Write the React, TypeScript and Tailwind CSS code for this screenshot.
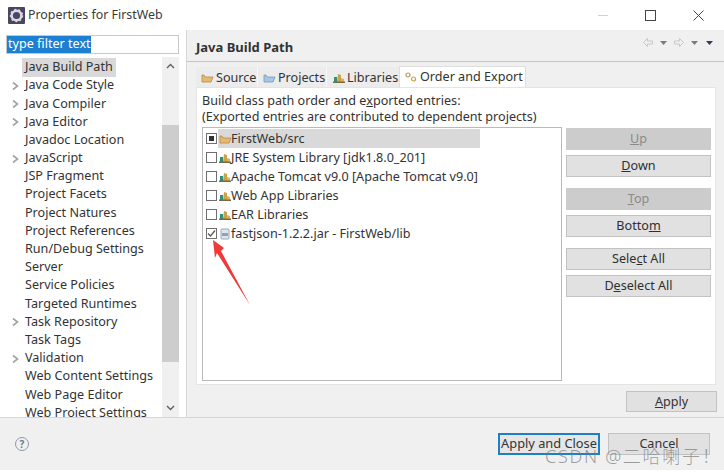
import React from "react";

const font = { fontFamily: '"Noto Sans", "Noto Sans CJK SC", sans-serif' };

const Chevron = () => (
  <svg width="7" height="10" viewBox="0 0 7 10" className="shrink-0">
    <path d="M1 1.5 L5.5 5 L1 8.5" fill="none" stroke="#a3a3a3" strokeWidth="1.6" />
  </svg>
);

const tree: [string, boolean][] = [
  ["Java Build Path", false],
  ["Java Code Style", true],
  ["Java Compiler", true],
  ["Java Editor", true],
  ["Javadoc Location", false],
  ["JavaScript", true],
  ["JSP Fragment", false],
  ["Project Facets", false],
  ["Project Natures", false],
  ["Project References", false],
  ["Run/Debug Settings", false],
  ["Server", false],
  ["Service Policies", false],
  ["Targeted Runtimes", false],
  ["Task Repository", true],
  ["Task Tags", false],
  ["Validation", true],
  ["Web Content Settings", false],
  ["Web Page Editor", false],
  ["Web Project Settings", false],
];

const Btn = ({ label, u, off, mt }: { label: string; u: number; off?: boolean; mt: string }) => (
  <div
    className={`h-[22px] w-[145px] border flex items-center justify-center text-[12.6px] ${mt} ${
      off ? "bg-[#cccccc] border-[#cccccc] text-[#8a8a8a]" : "bg-[#e1e1e1] border-[#c2c2c2] text-[#2f2f2f]"
    }`}
  >
    <span>
      {label.slice(0, u)}
      <span className="underline">{label[u]}</span>
      {label.slice(u + 1)}
    </span>
  </div>
);

const Lib = () => (
  <svg width="12" height="11" viewBox="0 0 12 11" className="shrink-0">
    <path d="M1 10 L1 5 L4 5 L4 10Z" fill="#2f8f7f" />
    <path d="M4 10 L5 2 L8 3 L8 10Z" fill="#c9a24a" />
    <path d="M8 10 L8 6 L11 7 L11 10Z" fill="#d9b45a" />
    <path d="M0 9.5 H12 V11 H0Z" fill="#7a6a42" />
  </svg>
);

const Folder = () => (
  <svg width="13" height="11" viewBox="0 0 13 11" className="shrink-0">
    <path d="M1 3 L1 10 L10 10 L12 5 L4 5 L3 3Z" fill="#e6b973" stroke="#b78a45" strokeWidth="0.8" />
  </svg>
);

const Box = ({ checked, filled }: { checked?: boolean; filled?: boolean }) => (
  <div className="w-[11px] h-[11px] border border-[#6f6f6f] bg-white shrink-0 flex items-center justify-center">
    {filled && <div className="w-[5px] h-[5px] bg-[#333]" />}
    {checked && (
      <svg width="9" height="9" viewBox="0 0 9 9">
        <path d="M1 4.5 L3.5 7 L8 1.5" fill="none" stroke="#555" strokeWidth="1.2" />
      </svg>
    )}
  </div>
);

const Row = ({ icon, text, box, sel }: { icon: React.ReactNode; text: string; box: React.ReactNode; sel?: boolean }) => (
  <div className="h-[19px] flex items-center pl-[3px] text-[12.6px] text-[#333] whitespace-nowrap">
    {box}
    <div className={`ml-px h-[19px] flex items-center w-[262px] ${sel ? "bg-[#d9d9d9]" : ""}`}>
      <div className="w-px" />
      <div className="w-[12px] shrink-0 flex items-center">{icon}</div>
      <span className="pt-[2px]">{text}</span>
    </div>
  </div>
);

export default function App() {
  return (
    <div className="relative w-[724px] h-[474px] bg-white overflow-hidden flex flex-col text-[#333]" style={font}>
      <div className="h-[30px] shrink-0 flex items-center pl-[8px] bg-white">
        <svg width="17" height="17" viewBox="0 0 17 17" className="shrink-0">
          <rect x="0" y="0" width="17" height="17" rx="1" fill="#4b4563" />
          <circle cx="8.5" cy="8.5" r="4.8" fill="none" stroke="#d8d8de" strokeWidth="2.4" />
          <circle cx="8.5" cy="8.5" r="6" fill="none" stroke="#d8d8de" strokeWidth="1.4" strokeDasharray="2 2.2" />
        </svg>
        <span className="ml-[3px] text-[12.4px] text-[#3a3a3a]">Properties for FirstWeb</span>
        <div className="ml-auto flex items-center">
          <div className="w-[10px] h-px bg-[#d0d0d0] mr-[37px]" />
          <div className="w-[11px] h-[11px] border border-[#444] mr-[37px]" />
          <svg width="11" height="11" viewBox="0 0 11 11" className="mr-[20px]">
            <path d="M0.5 0.5 L10.5 10.5 M10.5 0.5 L0.5 10.5" stroke="#444" strokeWidth="1" />
          </svg>
        </div>
      </div>

      <div className="flex h-[387px] shrink-0">
        <div className="w-[187px] shrink-0 border-r border-[#d6d6d6] pl-[6px] pt-[5px] flex flex-col overflow-hidden">
          <div className="w-[173px] h-[19px] shrink-0 border border-[#c8c8c8] flex items-center text-[12.6px] leading-none">
            <span className="bg-[#1d7fd0] text-white h-[17px] pl-[1px] flex items-center">type filter text</span>
          </div>
          <div className="flex mt-[3px] h-[360px] w-[173px]">
            <div className="w-[156px] pt-[1.5px] overflow-hidden">
              {tree.map(([t, c], i) => (
                <div key={t} className="h-[18.2px] flex items-center text-[12.6px] text-[#333] whitespace-nowrap">
                  <div className="w-[16px] flex justify-start pl-[6px] shrink-0">{c && <Chevron />}</div>
                  <span className={`px-[3px] ${i === 0 ? "bg-[#d9d9d9]" : ""}`}>{t}</span>
                </div>
              ))}
            </div>
            <div className="w-[17px] bg-[#f0f0f0] flex flex-col items-center">
              <div className="h-[18px] flex items-center">
                <svg width="9" height="6" viewBox="0 0 9 6"><path d="M1 5 L4.5 1.5 L8 5" fill="none" stroke="#606060" strokeWidth="1.4" /></svg>
              </div>
              <div className="w-[17px] h-[237px] mt-[50px] bg-[#cdcdcd]" />
              <div className="h-[18px] mt-[37px] flex items-center">
                <svg width="9" height="6" viewBox="0 0 9 6"><path d="M1 1 L4.5 4.5 L8 1" fill="none" stroke="#606060" strokeWidth="1.4" /></svg>
              </div>
            </div>
          </div>
        </div>

        <div className="flex-1 bg-[#f0f0f0] flex flex-col">
          <div className="h-[32px] shrink-0 border-b border-[#c4c4c4] flex items-center pl-[9px] pr-[11px]">
            <span className="font-bold text-[13px] text-[#333] pt-[5px]">Java Build Path</span>
            <div className="ml-auto flex items-center gap-[7px] self-start mt-[8px]">
              <svg width="10" height="9" viewBox="0 0 10 9"><path d="M0.5 4.5 L4.5 0.5 V3 H9.5 V6 H4.5 V8.5Z" fill="none" stroke="#c8c8c8" /></svg>
              <svg width="7" height="4" viewBox="0 0 7 4"><path d="M0 0 H7 L3.5 4Z" fill="#7a7a7a" /></svg>
              <svg width="10" height="9" viewBox="0 0 10 9"><path d="M9.5 4.5 L5.5 0.5 V3 H0.5 V6 H5.5 V8.5Z" fill="none" stroke="#c8c8c8" /></svg>
              <svg width="7" height="4" viewBox="0 0 7 4"><path d="M0 0 H7 L3.5 4Z" fill="#7a7a7a" /></svg>
              <svg width="7" height="4" viewBox="0 0 7 4" className="ml-px"><path d="M0 0 H7 L3.5 4Z" fill="#3d3560" /></svg>
            </div>
          </div>

          <div className="flex items-end pl-[9px] h-[25px] shrink-0 text-[12.6px] text-[#333] whitespace-nowrap">
            <div className="h-[20px] w-[62px] bg-[#ececec] flex items-center pl-[5px] gap-[2px] border-r border-[#f8f8f8]">
              <Folder /><span className="pt-[2px]">Source</span>
            </div>
            <div className="h-[20px] w-[69px] bg-[#ececec] flex items-center pl-[5px] gap-[2px] border-r border-[#f8f8f8]">
              <svg width="13" height="11" viewBox="0 0 13 11" className="shrink-0"><path d="M1 3 L1 10 L10 10 L12 5 L4 5 L3 3Z" fill="#a9c8e6" stroke="#6f97bd" strokeWidth="0.8" /></svg>
              <span className="pt-[2px]">Projects</span>
            </div>
            <div className="h-[20px] w-[72px] bg-[#ececec] flex items-center pl-[6px] gap-[2px]">
              <Lib /><span className="pt-[2px]">Libraries</span>
            </div>
            <div className="h-[21px] w-[127px] bg-white flex items-center pl-[5px] gap-[3px] border-t border-x border-[#dedede]">
              <svg width="12" height="11" viewBox="0 0 12 11" className="shrink-0">
                <circle cx="3" cy="3" r="2" fill="none" stroke="#b89a4e" strokeWidth="1.2" />
                <circle cx="8.5" cy="7" r="2" fill="none" stroke="#c9a24a" strokeWidth="1.2" />
              </svg>
              <span>Order and Export</span>
            </div>
          </div>

          <div className="ml-[9px] w-[520px] h-[298px] shrink-0 bg-white border border-[#e4e4e4] pl-[5px] pt-[5px] flex flex-col">
            <div className="text-[12.6px] leading-[16px] text-[#333] h-[34px] whitespace-nowrap">
              <div>Build class path order and e<span className="underline">x</span>ported entries:</div>
              <div>(Exported entries are contributed to dependent projects)</div>
            </div>
            <div className="flex gap-[4px]">
              <div className="w-[360px] h-[254px] border border-[#b9b9b9] pt-px bg-white">
                <Row sel box={<Box filled />} icon={<Folder />} text="FirstWeb/src" />
                <Row box={<Box />} icon={<Lib />} text="JRE System Library [jdk1.8.0_201]" />
                <Row box={<Box />} icon={<Lib />} text="Apache Tomcat v9.0 [Apache Tomcat v9.0]" />
                <Row box={<Box />} icon={<Lib />} text="Web App Libraries" />
                <Row box={<Box />} icon={<Lib />} text="EAR Libraries" />
                <Row
                  box={<Box checked />}
                  icon={
                    <svg width="12" height="12" viewBox="0 0 12 12" className="shrink-0">
                      <rect x="2" y="1" width="8" height="10" rx="1" fill="#dfe6ee" stroke="#9aa7b5" />
                      <rect x="3" y="5" width="6" height="3" fill="#8fa3b8" />
                    </svg>
                  }
                  text="fastjson-1.2.2.jar - FirstWeb/lib"
                />
              </div>
              <div className="flex flex-col pt-[1px]">
                <Btn label="Up" u={0} off mt="" />
                <Btn label="Down" u={0} mt="mt-[5px]" />
                <Btn label="Top" u={0} off mt="mt-[11px]" />
                <Btn label="Bottom" u={5} mt="mt-[5px]" />
                <Btn label="Select All" u={4} mt="mt-[11px]" />
                <Btn label="Deselect All" u={1} mt="mt-[5px]" />
              </div>
            </div>
          </div>

          <div className="flex justify-end pr-[7px] mt-[6px]">
            <div className="w-[91px] h-[21px] bg-[#e1e1e1] border border-[#c2c2c2] flex items-center justify-center text-[12.6px]">
              <span className="pt-[2px]"><span className="underline">A</span>pply</span>
            </div>
          </div>
        </div>
      </div>

      <div className="h-[53px] shrink-0 bg-[#f0f0f0] border-t border-[#d6d6d6] flex items-center pl-[15px] pr-[14px]">
        <div className="w-[14px] h-[14px] rounded-full border border-[#8c9aa8] text-[10px] leading-none text-[#6a7a8a] flex items-center justify-center font-bold">?</div>
        <div className="ml-auto flex gap-[8px]">
          <div className="w-[102px] h-[22px] bg-[#e6e6e6] border-2 border-[#1f7fc4] flex items-center justify-center text-[12.8px] whitespace-nowrap">Apply and Close</div>
          <div className="w-[102px] h-[22px] bg-[#e1e1e1] border border-[#c2c2c2] flex items-center justify-center text-[12.6px]">Cancel</div>
        </div>
      </div>

      <svg width="40" height="80" viewBox="0 0 40 80" className="absolute left-[212px] top-[236px]">
        <path d="M1 4 L12 12 L9 15 L38 69 L5 17 L3 22Z" fill="#f03a3a" />
      </svg>
      <div className="absolute left-[545px] top-[443px] text-[18px] leading-[26px] tracking-[1.7px] font-light text-[#777]/70 whitespace-nowrap">
        CSDN @二哈喇子！
      </div>
    </div>
  );
}
